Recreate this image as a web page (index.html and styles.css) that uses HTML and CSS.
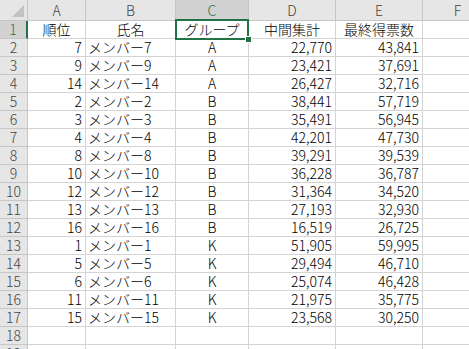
FILE: index.html
```html
<!DOCTYPE html>
<html lang="ja">
<head>
<meta charset="utf-8">
<link rel="stylesheet" href="styles.css">
</head>
<body>
<div class="sheet">
  <div class="grid">
    <div class="corner"><span class="tri"></span></div>
    <div class="ch">A</div><div class="ch">B</div><div class="ch sel">C</div><div class="ch">D</div><div class="ch">E</div><div class="ch">F</div>

    <div class="rh sel">1</div><div class="c ctr">順位</div><div class="c ctr">氏名</div><div class="c ctr">グループ</div><div class="c ctr">中間集計</div><div class="c ctr">最終得票数</div><div class="c"></div>
    <div class="rh">2</div><div class="c r">7</div><div class="c l">メンバー7</div><div class="c ctr">A</div><div class="c r">22,770</div><div class="c r">43,841</div><div class="c"></div>
    <div class="rh">3</div><div class="c r">9</div><div class="c l">メンバー9</div><div class="c ctr">A</div><div class="c r">23,421</div><div class="c r">37,691</div><div class="c"></div>
    <div class="rh">4</div><div class="c r">14</div><div class="c l">メンバー14</div><div class="c ctr">A</div><div class="c r">26,427</div><div class="c r">32,716</div><div class="c"></div>
    <div class="rh">5</div><div class="c r">2</div><div class="c l">メンバー2</div><div class="c ctr">B</div><div class="c r">38,441</div><div class="c r">57,719</div><div class="c"></div>
    <div class="rh">6</div><div class="c r">3</div><div class="c l">メンバー3</div><div class="c ctr">B</div><div class="c r">35,491</div><div class="c r">56,945</div><div class="c"></div>
    <div class="rh">7</div><div class="c r">4</div><div class="c l">メンバー4</div><div class="c ctr">B</div><div class="c r">42,201</div><div class="c r">47,730</div><div class="c"></div>
    <div class="rh">8</div><div class="c r">8</div><div class="c l">メンバー8</div><div class="c ctr">B</div><div class="c r">39,291</div><div class="c r">39,539</div><div class="c"></div>
    <div class="rh">9</div><div class="c r">10</div><div class="c l">メンバー10</div><div class="c ctr">B</div><div class="c r">36,228</div><div class="c r">36,787</div><div class="c"></div>
    <div class="rh">10</div><div class="c r">12</div><div class="c l">メンバー12</div><div class="c ctr">B</div><div class="c r">31,364</div><div class="c r">34,520</div><div class="c"></div>
    <div class="rh">11</div><div class="c r">13</div><div class="c l">メンバー13</div><div class="c ctr">B</div><div class="c r">27,193</div><div class="c r">32,930</div><div class="c"></div>
    <div class="rh">12</div><div class="c r">16</div><div class="c l">メンバー16</div><div class="c ctr">B</div><div class="c r">16,519</div><div class="c r">26,725</div><div class="c"></div>
    <div class="rh">13</div><div class="c r">1</div><div class="c l">メンバー1</div><div class="c ctr">K</div><div class="c r">51,905</div><div class="c r">59,995</div><div class="c"></div>
    <div class="rh">14</div><div class="c r">5</div><div class="c l">メンバー5</div><div class="c ctr">K</div><div class="c r">29,494</div><div class="c r">46,710</div><div class="c"></div>
    <div class="rh">15</div><div class="c r">6</div><div class="c l">メンバー6</div><div class="c ctr">K</div><div class="c r">25,074</div><div class="c r">46,428</div><div class="c"></div>
    <div class="rh">16</div><div class="c r">11</div><div class="c l">メンバー11</div><div class="c ctr">K</div><div class="c r">21,975</div><div class="c r">35,775</div><div class="c"></div>
    <div class="rh">17</div><div class="c r">15</div><div class="c l">メンバー15</div><div class="c ctr">K</div><div class="c r">23,568</div><div class="c r">30,250</div><div class="c"></div>
    <div class="rh">18</div><div class="c"></div><div class="c"></div><div class="c"></div><div class="c"></div><div class="c"></div><div class="c"></div>
    <div class="rh">19</div><div class="c"></div><div class="c"></div><div class="c"></div><div class="c"></div><div class="c"></div><div class="c"></div>
  </div>
  <div class="selbox"><span class="handle"></span></div>
</div>
</body>
</html>
```

FILE: styles.css
```css
html, body {
  margin: 0;
  padding: 0;
  background: #ffffff;
  overflow: hidden;
}

.sheet {
  position: relative;
  width: 469px;
  height: 349px;
  overflow: hidden;
  font-family: "Noto Sans CJK JP", "Liberation Sans", sans-serif;
  font-weight: 300;
  font-size: 14px;
  color: #000;
}

.grid {
  display: grid;
  grid-template-columns: 28px 58px 90px 73px 87px 87px 70px;
  grid-template-rows: 21px repeat(19, 18px);
  width: 493px;
}

.grid > div {
  box-sizing: border-box;
  border-right: 1px solid #d4d4d4;
  border-bottom: 1px solid #d4d4d4;
  white-space: nowrap;
  line-height: 17px;
}

.corner {
  position: relative;
  background: #e6e6e6;
  border-right-color: #c6c6c6 !important;
  border-bottom-color: #c6c6c6 !important;
}

.tri {
  position: absolute;
  right: 3px;
  bottom: 3px;
  width: 0;
  height: 0;
  border-left: 12px solid transparent;
  border-bottom: 12px solid #c2c2c2;
}

.ch {
  background: #e6e6e6;
  color: #444;
  text-align: center;
  line-height: 20px !important;
  border-right-color: #c6c6c6 !important;
  border-bottom-color: #c6c6c6 !important;
}

.ch.sel {
  background: #d2d2d2;
  color: #217346;
  border-bottom: 2px solid #217346 !important;
}

.rh {
  background: #e6e6e6;
  color: #444;
  text-align: center;
  border-right-color: #c6c6c6 !important;
  border-bottom-color: #c6c6c6 !important;
}

.rh.sel {
  background: #d2d2d2;
  color: #217346;
  border-right: 2px solid #217346 !important;
}

.c.r {
  text-align: right;
  padding-right: 3px;
}

.c.l {
  text-align: left;
  padding-left: 2px;
}

.c.ctr {
  text-align: center;
}

.selbox {
  position: absolute;
  left: 175px;
  top: 19px;
  width: 74px;
  height: 21px;
  box-sizing: border-box;
  border: 2px solid #217346;
}

.handle {
  position: absolute;
  right: -5px;
  bottom: -5px;
  width: 5px;
  height: 5px;
  background: #217346;
  border: 1px solid #ffffff;
}
```
